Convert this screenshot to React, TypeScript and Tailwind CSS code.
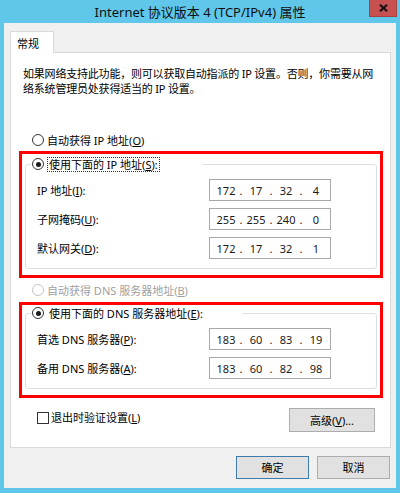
import React from "react";

function U({ c }: { c: string }) {
  return <span className="underline underline-offset-[1px]">{c}</span>;
}

function Radio({ checked, disabled }: { checked?: boolean; disabled?: boolean }) {
  return (
    <span
      className={`w-[12px] h-[12px] rounded-full border bg-white flex items-center justify-center shrink-0 ${
        disabled ? "border-[#c4c4c4]" : "border-[#333333]"
      }`}
    >
      {checked && <span className="w-[5px] h-[5px] rounded-full bg-[#1a1a1a]" />}
    </span>
  );
}

function IpBox({ parts }: { parts: string[] }) {
  return (
    <div className="w-[122px] h-[22px] border border-[#a8a8a8] bg-white flex items-center pl-[4px] text-[11px] text-[#1a1a1a]">
      {parts.map((p, i) => (
        <React.Fragment key={i}>
          {i > 0 && <span className="w-[6px] text-center">.</span>}
          <span className="w-[24px] text-center">{p}</span>
        </React.Fragment>
      ))}
    </div>
  );
}

function Row({ label, parts }: { label: React.ReactNode; parts: string[] }) {
  return (
    <div className="flex items-center h-[22px] pl-[11px]">
      <div className="w-[172px]">{label}</div>
      <IpBox parts={parts} />
    </div>
  );
}

export default function App() {
  return (
    <div className="w-[400px] h-[493px] bg-[#60c7ea] flex flex-col font-['Noto_Sans','Noto_Sans_CJK_SC',sans-serif] text-[11px] text-black leading-none">
      {/* Title bar */}
      <div className="h-[23px] relative flex items-center justify-center">
        <span className="text-[13px] text-[#111] pt-[1px]">Internet 协议版本 4 (TCP/IPv4) 属性</span>
        <div className="absolute right-[3px] top-0 w-[28px] h-[17px] bg-[#c75050] border border-t-0 border-[#a84343] flex items-center justify-center">
          <svg width="9" height="8" viewBox="0 0 9 8">
            <path d="M1 0.8 L8 7.2 M8 0.8 L1 7.2" stroke="#141414" strokeWidth="2.2" />
          </svg>
        </div>
      </div>

      {/* Body */}
      <div className="mx-[4px] w-[392px] h-[465px] bg-[#f0f0f0] flex flex-col pl-[6px] pt-[8px]">
        {/* tab */}
        <div className="flex">
          <div className="h-[22px] w-[44px] bg-white border border-b-0 border-[#d9d9d9] -mb-px relative z-10 flex items-center pl-[6px] pt-[1px]">
            常规
          </div>
        </div>

        {/* panel */}
        <div className="w-[381px] h-[396px] bg-white border border-[#d9d9d9] flex flex-col">
          <div className="pt-[13px] pl-[12px] leading-[15px] tracking-[-0.2px]">
            如果网络支持此功能，则可以获取自动指派的 IP 设置。否则，你需要从网
            <br />
            络系统管理员处获得适当的 IP 设置。
          </div>

          <div className="mt-[36px] h-[16px] flex items-center pl-[21px] gap-[3px]">
            <Radio />
            <span>
              自动获得 IP 地址(<U c="O" />)
            </span>
          </div>

          {/* red box 1 */}
          <div className="mt-[3px] ml-[8px] w-[364px] h-[127px] border-[3px] border-[#ff0000] pl-[3px] pt-[10px]">
            <div className="w-[352px] h-[105px] border border-[#dcdfe3] rounded-[3px] flex flex-col">
              <div className="-mt-[9px] ml-[5px] w-[171px] h-[16px] bg-white pl-[1px] flex items-center gap-[3px]">
                <Radio checked />
                <span className="border border-dotted border-[#333] px-[1px] py-[1px]">
                  使用下面的 IP 地址(<U c="S" />):
                </span>
              </div>
              <div className="mt-[7px] flex flex-col gap-[7px]">
                <Row label={<>IP 地址(<U c="I" />):</>} parts={["172", "17", "32", "4"]} />
                <Row label={<>子网掩码(<U c="U" />):</>} parts={["255", "255", "240", "0"]} />
                <Row label={<>默认网关(<U c="D" />):</>} parts={["172", "17", "32", "1"]} />
              </div>
            </div>
          </div>

          <div className="mt-[4px] h-[16px] flex items-center pl-[21px] gap-[3px] text-[#a0a0a0]">
            <Radio disabled />
            <span>
              自动获得 DNS 服务器地址(<U c="B" />)
            </span>
          </div>

          {/* red box 2 */}
          <div className="mt-[4px] ml-[8px] w-[364px] h-[96px] border-[3px] border-[#ff0000] pl-[3px] pt-[8px]">
            <div className="w-[352px] h-[76px] border border-[#dcdfe3] rounded-[3px] flex flex-col">
              <div className="-mt-[9px] ml-[5px] w-[211px] h-[16px] bg-white pl-[1px] flex items-center gap-[3px]">
                <Radio checked />
                <span className="px-[2px]">
                  使用下面的 DNS 服务器地址(<U c="E" />):
                </span>
              </div>
              <div className="mt-[7px] flex flex-col gap-[7px]">
                <Row label={<>首选 DNS 服务器(<U c="P" />):</>} parts={["183", "60", "83", "19"]} />
                <Row label={<>备用 DNS 服务器(<U c="A" />):</>} parts={["183", "60", "82", "98"]} />
              </div>
            </div>
          </div>

          <div className="mt-[10px] flex items-center justify-between pl-[26px] pr-[15px]">
            <div className="flex items-center gap-[2px] -mt-[5px]">
              <span className="w-[12px] h-[12px] border border-[#333] bg-white" />
              <span>
                退出时验证设置(<U c="L" />)
              </span>
            </div>
            <div className="w-[86px] h-[24px] bg-[#e1e1e1] border border-[#adadad] flex items-center justify-center">
              高级(<U c="V" />)...
            </div>
          </div>
        </div>

        {/* footer */}
        <div className="mt-[8px] flex justify-end gap-[8px] pr-[6px]">
          <div className="w-[73px] h-[23px] bg-[#e1e1e1] border border-[#3d7bad] flex items-center justify-center">
            确定
          </div>
          <div className="w-[73px] h-[23px] bg-[#e1e1e1] border border-[#adadad] flex items-center justify-center">
            取消
          </div>
        </div>
      </div>
    </div>
  );
}
